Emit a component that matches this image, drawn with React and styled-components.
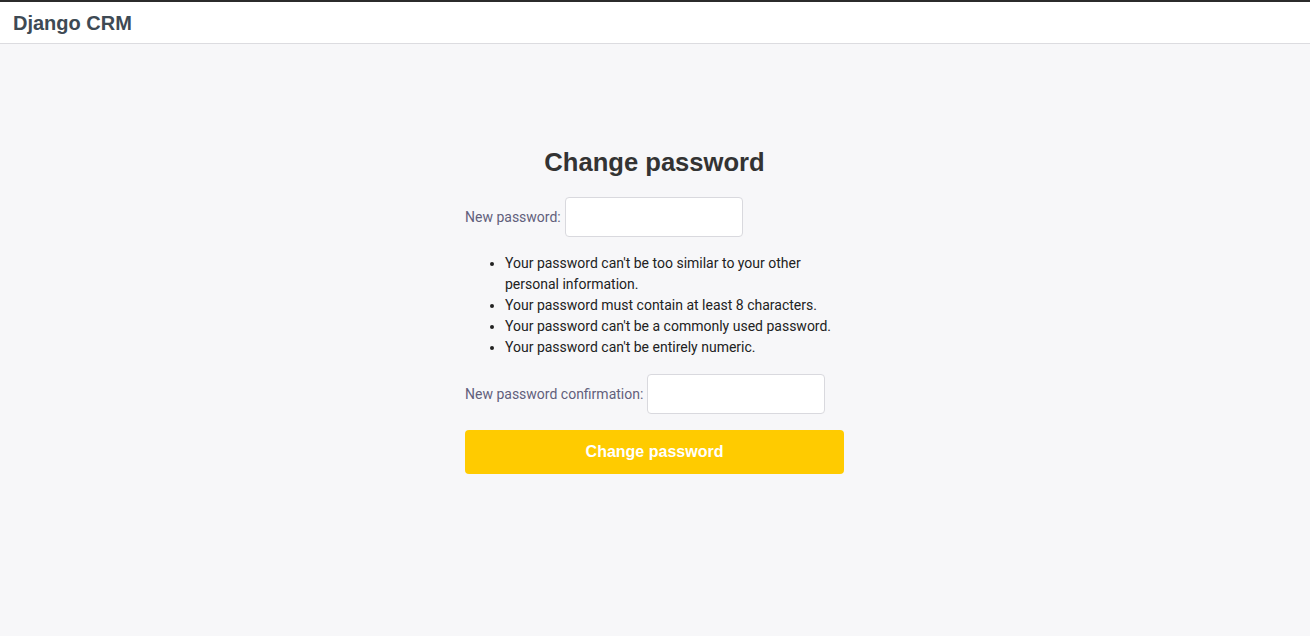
import styled, { createGlobalStyle } from "styled-components";

const GlobalStyle = createGlobalStyle`
    html, body {
        margin: 0;
        padding: 0;
        background: #f7f7f9;
        font-family: Roboto, "Liberation Sans", Arial, sans-serif;
        color: #333;
    }
    * {
        box-sizing: border-box;
    }
`;

const headingFont = `"Liberation Sans", Arial, Helvetica, sans-serif`;

// ===== Header =====
const Header = styled.header`
    height: 44px;
    background: #fff;
    border-top: 2px solid #2b2b2b;
    border-bottom: 1px solid #dcdce0;
    display: flex;
    align-items: center;
    padding: 2px 0 0 13px;
`;

const Brand = styled.a`
    font-family: ${headingFont};
    font-size: 20px;
    font-weight: 700;
    color: #3e4a54;
    text-decoration: none;
`;

// ===== Form =====
const Main = styled.main`
    min-height: 592px;
    padding: 103px 1px 0 0;
`;

const Container = styled.div`
    width: 379px;
    margin: 0 auto;
`;

const Title = styled.h1`
    margin: 0 0 19px;
    font-family: ${headingFont};
    font-size: 25.6px;
    line-height: 31px;
    font-weight: 700;
    text-align: center;
    color: #333;
`;

const Form = styled.form`
    display: flex;
    flex-direction: column;
    gap: 16px;
`;

const FieldRow = styled.div`
    display: flex;
    align-items: center;
    gap: 4px;
`;

const Label = styled.label`
    font-size: 14px;
    color: #625f7c;
`;

const Input = styled.input`
    width: 178px;
    height: 40px;
    padding: 6px 8px;
    border: 1px solid #d9d9de;
    border-radius: 4px;
    background: #fff;
    font: inherit;
    font-size: 14px;
    outline: none;
`;

const HelpList = styled.ul`
    margin: 0;
    padding-left: 40px;
    font-size: 14px;
    line-height: 21px;
    color: #222;
`;

const SubmitButton = styled.button`
    height: 44px;
    border: none;
    border-radius: 4px;
    background: #ffcb00;
    color: #fff;
    font-family: ${headingFont};
    font-size: 16px;
    font-weight: 700;
    cursor: pointer;
`;

const hints = [
    "Your password can't be too similar to your other personal information.",
    "Your password must contain at least 8 characters.",
    "Your password can't be a commonly used password.",
    "Your password can't be entirely numeric.",
];

function App() {
    return (
        <>
            <GlobalStyle />
            <Header>
                <Brand href="#">Django CRM</Brand>
            </Header>
            <Main>
                <Container>
                    <Title>Change password</Title>
                    <Form onSubmit={(e) => e.preventDefault()}>
                        <FieldRow>
                            <Label htmlFor="id_new_password1">New password:</Label>
                            <Input id="id_new_password1" type="password" />
                        </FieldRow>
                        <HelpList>
                            {hints.map((h) => (
                                <li key={h}>{h}</li>
                            ))}
                        </HelpList>
                        <FieldRow>
                            <Label htmlFor="id_new_password2">
                                New password confirmation:
                            </Label>
                            <Input id="id_new_password2" type="password" />
                        </FieldRow>
                        <SubmitButton type="submit">Change password</SubmitButton>
                    </Form>
                </Container>
            </Main>
        </>
    );
}

export default App;
